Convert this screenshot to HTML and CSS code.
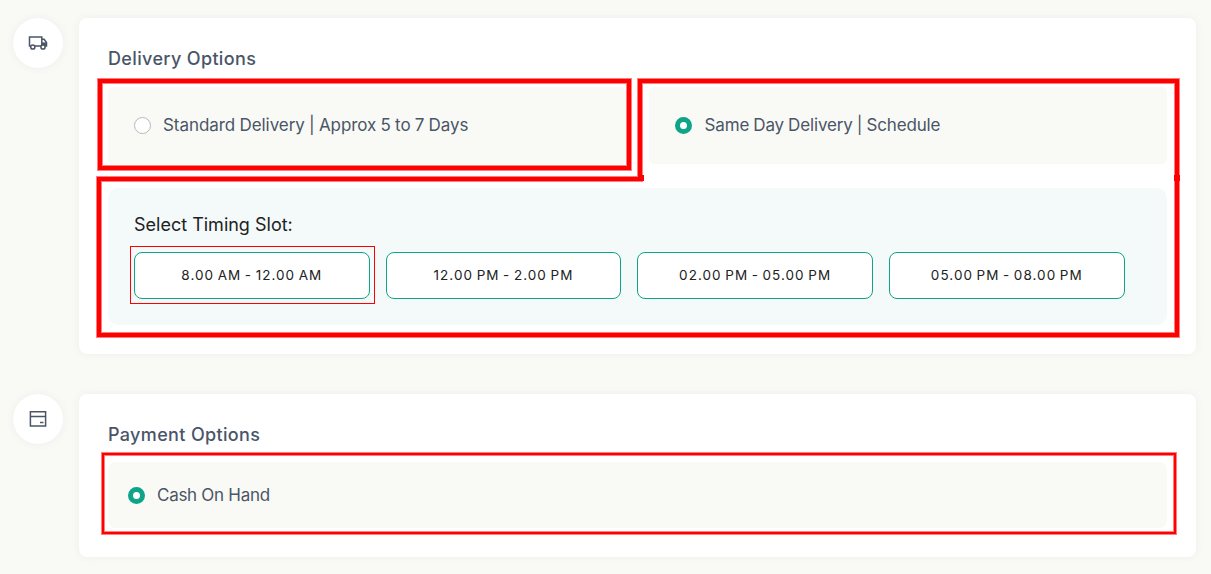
FILE: index.html
```
<!DOCTYPE html>
<html lang="en">
<head>
<meta charset="utf-8">
<title>Checkout</title>
<link rel="stylesheet" href="styles.css">
</head>
<body>
<main class="checkout">
  <section class="step">
    <div class="step-icon">
      <svg width="20" height="20" viewBox="0 0 20 20" fill="none" stroke="#4a5568" stroke-width="1.5">
        <path d="M2.700 13H1.500V4h12.300v9M7 13h6M13.800 6.300h2.300l2.400 3.200V13h-1.200"/>
        <path d="M14 9.400h4.500v3.400h-4.500z" fill="#4a5568" stroke="none"/>
        <circle cx="4.800" cy="14" r="2.100" fill="#fff"/>
        <circle cx="15" cy="14" r="2.100" fill="#fff"/>
      </svg>
    </div>
    <div class="card card-delivery">
      <h2 class="card-title">Delivery Options</h2>
      <div class="options">
        <label class="option"><span class="radio"></span><span class="label label-standard">Standard Delivery | Approx 5 to 7 Days</span></label>
        <label class="option"><span class="radio radio-on"></span><span class="label label-same">Same Day Delivery | Schedule</span></label>
      </div>
      <div class="timing">
        <h3 class="timing-title">Select Timing Slot:</h3>
        <div class="slots">
          <div class="slot">8.00 AM - 12.00 AM</div>
          <div class="slot">12.00 PM - 2.00 PM</div>
          <div class="slot">02.00 PM - 05.00 PM</div>
          <div class="slot">05.00 PM - 08.00 PM</div>
        </div>
      </div>
    </div>
  </section>
  <section class="step">
    <div class="step-icon">
      <svg width="20" height="20" viewBox="0 0 20 20" fill="none" stroke="#4a5568" stroke-width="1.5">
        <path d="M2.400 2.800h15.200v14.200H2.400zM2.400 7.500h15.200"/>
        <path d="M12 13.500h3.500"/>
      </svg>
    </div>
    <div class="card card-payment">
      <h2 class="card-title">Payment Options</h2>
      <label class="option option-cash"><span class="radio radio-on"></span><span class="label label-cash">Cash On Hand</span></label>
    </div>
  </section>
</main>
<svg class="marks" width="1211" height="574" viewBox="0 0 1211 574" fill="none">
  <g stroke="#ff7f7f" stroke-width="6">
    <rect x="100" y="81" width="529" height="87"/>
    <path d="M643 179H99V335H1177V81H640V180"/>
  </g>
  <g stroke="#f00" stroke-width="4">
    <rect x="100" y="81" width="529" height="87"/>
    <path d="M644 179H99V335H1177V81H640V180"/>
  </g>
  <path d="M640 175h4v6h-4zM1174 175h6v6h-6z" fill="#f00"/>
  <rect x="103" y="454" width="1072" height="79" stroke="#ff7f7f" stroke-width="4"/>
  <rect x="103" y="454" width="1072" height="79" stroke="#f00" stroke-width="2"/>
  <rect x="130.500" y="246.500" width="244" height="57" stroke="#f00"/>
</svg>
</body>
</html>
```
FILE: styles.css
```
* { box-sizing: border-box; }
body {
  margin: 0;
  height: 574px;
  overflow: hidden;
  background: #f9faf5;
  color: #4a5568;
  font-family: Inter, "Liberation Sans", sans-serif;
}
.checkout {
  display: flex;
  flex-direction: column;
  gap: 40px;
  padding: 18px 15px 0 13px;
}
.step { display: flex; align-items: flex-start; gap: 16px; }
.step-icon {
  display: flex;
  flex: none;
  align-items: center;
  justify-content: center;
  width: 50px;
  height: 50px;
  border-radius: 50%;
  background: #fff;
  box-shadow: 0 0 8px #eeeeee;
}
.card {
  flex: 1;
  padding: 29px;
  border-radius: 8px;
  background: #fff;
  box-shadow: 0 0 8px #eeeeee;
}
.card-delivery { height: 336px; }
.card-payment { height: 163px; }
.card-title {
  margin: 0;
  height: 40px;
  font-size: 18px;
  font-weight: 500;
  line-height: 23px;
  letter-spacing: 0.35px;
  white-space: nowrap;
}
.options { display: grid; grid-template-columns: 1fr 1fr; gap: 23px; }
.option {
  display: flex;
  align-items: center;
  gap: 12px;
  height: 77px;
  padding: 0 26px;
  border-radius: 5px;
  background: #f9faf5;
}
.option-cash { height: 66px; margin-top: -1px; padding: 0 20px; border-radius: 8px; }
.label { padding-bottom: 1px; font-size: 17px; line-height: 22px; white-space: nowrap; }
.label-standard { letter-spacing: -0.05px; word-spacing: -0.5px; }
.label-same { padding-left: 0.5px; letter-spacing: -0.15px; word-spacing: -0.5px; }
.label-cash { letter-spacing: -0.28px; }
.radio {
  flex: none;
  width: 17px;
  height: 17px;
  border: 1px solid #b8b8b8;
  border-radius: 50%;
  background: #fff;
}
.radio-on { border: 5px solid #0da487; }
.timing {
  height: 137px;
  margin-top: 24px;
  padding: 26px 42.4px 26px 26px;
  border-radius: 10px;
  background: #f4fafa;
}
.timing-title {
  margin: 0;
  height: 38px;
  color: #222;
  font-size: 18px;
  font-weight: 400;
  line-height: 22px;
}
.slots { display: grid; grid-template-columns: repeat(4, 1fr); gap: 16px; }
.slot {
  display: flex;
  align-items: center;
  justify-content: center;
  height: 47px;
  padding-bottom: 2px;
  border: 1px solid #0da487;
  border-radius: 8px;
  background: #fff;
  color: #222;
  font-size: 13.5px;
  letter-spacing: 1.05px;
  word-spacing: -1.3px;
  white-space: nowrap;
}
.marks { position: absolute; top: 0; left: 0; pointer-events: none; }
```
